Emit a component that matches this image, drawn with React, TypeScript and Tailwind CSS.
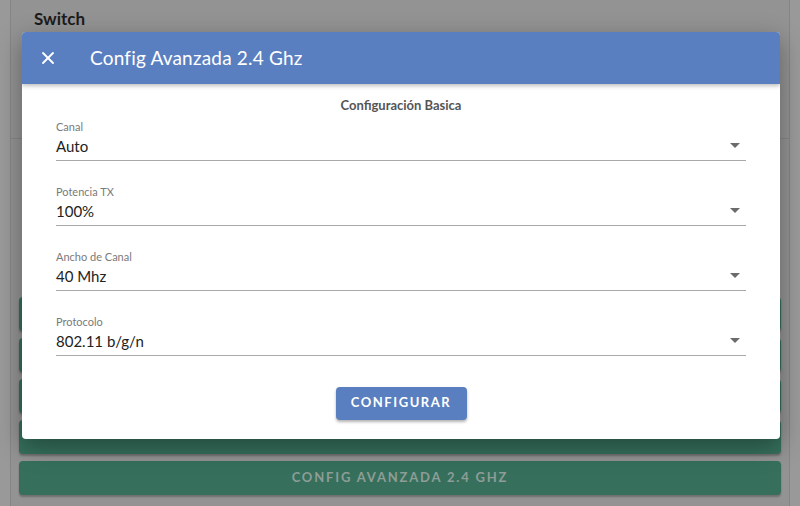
import React from 'react';
import { X } from 'lucide-react';

const fields = [
  { label: 'Canal', value: 'Auto' },
  { label: 'Potencia TX', value: '100%' },
  { label: 'Ancho de Canal', value: '40 Mhz' },
  { label: 'Protocolo', value: '802.11 b/g/n' },
];

const pageButtons = ['CONFIG 1', 'CONFIG 2', 'CONFIG 3', 'CONFIG WIFI EXTRA', 'CONFIG AVANZADA 2.4 GHZ'];

export default function App() {
  return (
    <div
      className="relative w-[800px] h-[506px] overflow-hidden bg-[#999999]"
      style={{ fontFamily: 'Lato, "Noto Sans", sans-serif' }}
    >
      {/* Background page (dimmed) */}
      <div className="mx-[10px] h-full border-x border-[#858585] bg-[#939393] flex flex-col">
        <div className="h-[139px] border-b border-[#878787] px-[23px] pt-[6px]">
          <h2 className="text-[17px] font-bold text-[#1c1c1c]">Switch</h2>
        </div>
        <div className="flex-1 flex flex-col gap-[7px] px-[8px] pt-[158px]">
          {pageButtons.map((b, i) => (
            <div
              key={i}
              className="h-[34px] rounded-[4px] bg-[#36705c] flex items-center justify-center text-[13px] font-bold tracking-[0.14em] text-[#8e9d97] shadow-[0_2px_2px_rgba(0,0,0,0.25)]"
            >
              {i === 4 ? b : ''}
            </div>
          ))}
        </div>
      </div>

      {/* Modal */}
      <div className="absolute left-[22px] top-[32px] w-[758px] h-[407px] bg-white rounded-[4px] overflow-hidden shadow-[0_8px_24px_rgba(0,0,0,0.35)]">
        <div className="h-[52px] bg-[#5a7fc0] flex items-center shadow-[0_2px_4px_rgba(0,0,0,0.25)] relative">
          <X className="ml-[16px] text-white" size={20} strokeWidth={2.2} />
          <span className="ml-[32px] text-[19px] tracking-[0.01em] text-white">Config Avanzada 2.4 Ghz</span>
        </div>
        <div className="px-[34px] pt-[12px]">
          <div className="text-center text-[13px] font-bold text-[#555555]">Configuración Basica</div>
          <div className="flex flex-col gap-[24px] mt-[4px]">
            {fields.map((f) => (
              <div key={f.label} className="border-b border-[#a9a9a9] h-[41px] flex flex-col">
                <span className="text-[11px] text-[#7a7a7a] leading-[14px]">{f.label}</span>
                <div className="flex items-center justify-between mt-[3px]">
                  <span className="text-[15px] text-[#222222] leading-[18px]">{f.value}</span>
                  <svg width="10" height="5" viewBox="0 0 10 5" className="mr-[6px]">
                    <path d="M0 0 L10 0 L5 5 Z" fill="#6b6b6b" />
                  </svg>
                </div>
              </div>
            ))}
          </div>
          <div className="flex justify-center mt-[31px]">
            <button className="w-[131px] h-[33px] rounded-[4px] bg-[#5a7fc0] text-white text-[13px] font-bold tracking-[0.12em] shadow-[0_2px_3px_rgba(0,0,0,0.3)]">
              CONFIGURAR
            </button>
          </div>
        </div>
      </div>
    </div>
  );
}
